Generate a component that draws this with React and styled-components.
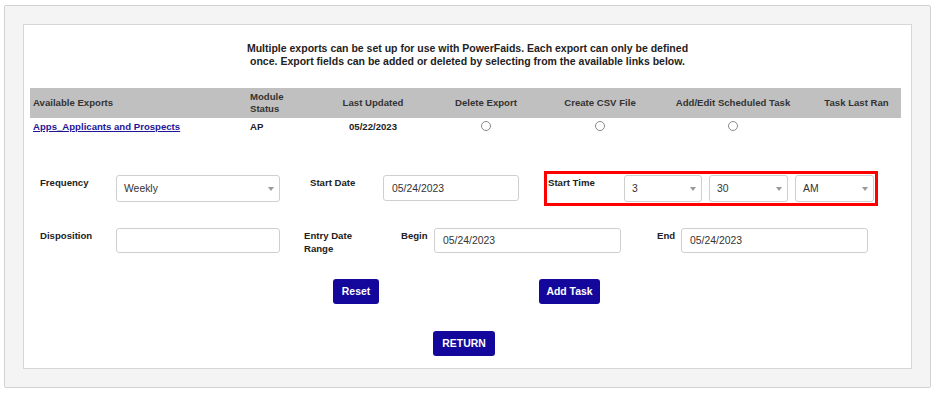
import styled, { createGlobalStyle } from "styled-components";

const GlobalStyle = createGlobalStyle`
  body {
    margin: 0;
    background: #fff;
    font-family: "Liberation Sans", Arial, sans-serif;
    color: #222;
  }
  * { box-sizing: border-box; }
`;

const Outer = styled.div`
  margin: 5px 0 0 4px;
  width: 927px;
  height: 383px;
  padding: 18px;
  background: #f4f4f4;
  border: 1px solid #d2d2d2;
  border-radius: 2px;
`;

const Inner = styled.div`
  width: 889px;
  height: 345px;
  padding: 17px 6px 0;
  background: #fff;
  border: 1px solid #d6d6d6;
`;

const Intro = styled.p`
  margin: 0 0 20px;
  text-align: center;
  font-size: 10.5px;
  font-weight: bold;
  line-height: 13px;
  color: #222;
`;

const Grid = styled.div`
  display: grid;
  width: 871px;
  grid-template-columns: 217px 73px 106px 120px 108px 158px 89px;
`;

const HeadRow = styled(Grid)`
  height: 30px;
  background: #c0c0c0;
`;

const BodyRow = styled(Grid)`
  height: 18px;
`;

const Cell = styled.div`
  display: flex;
  align-items: center;
  justify-content: ${(p) => (p.$left ? "flex-start" : "center")};
  padding-left: ${(p) => (p.$left ? "3px" : "0")};
  font-size: 9.6px;
  font-weight: bold;
  line-height: 12px;
  color: ${(p) => (p.$head ? "#333" : "#222")};
`;

const ExportLink = styled.a`
  color: #1f1596;
  text-decoration: underline;
  cursor: pointer;
`;

const Radio = styled.span`
  display: inline-block;
  width: 10px;
  height: 10px;
  margin-top: -3px;
  border: 1px solid #8a8a8a;
  border-radius: 50%;
  background: #fff;
`;

const FormRow = styled.div`
  display: flex;
  align-items: flex-start;
  padding-left: 10px;
  margin-top: ${(p) => p.$mt}px;
`;

const Label = styled.div`
  flex: none;
  width: ${(p) => p.$w}px;
  margin-left: ${(p) => p.$ml || 0}px;
  padding-top: ${(p) => p.$pt || 0}px;
  font-size: 9.6px;
  font-weight: bold;
  line-height: 13px;
  color: #222;
`;

const Control = styled.div`
  flex: none;
  position: relative;
  display: flex;
  align-items: center;
  width: ${(p) => p.$w}px;
  height: ${(p) => p.$h || 26}px;
  margin-top: ${(p) => p.$mt || 0}px;
  padding-left: ${(p) => (p.$select ? 7 : 8)}px;
  border: 1px solid #cfcfcf;
  border-radius: 3px;
  background: #fff;
  font-size: 10.4px;
  color: #333;

  ${(p) =>
    p.$select &&
    `
    &::after {
      content: "";
      position: absolute;
      right: 5px;
      top: 11px;
      border-left: 3.5px solid transparent;
      border-right: 3.5px solid transparent;
      border-top: 4px solid #999;
    }
  `}
`;

const TimeBox = styled.div`
  flex: none;
  display: flex;
  align-items: flex-start;
  gap: 7px;
  margin-left: ${(p) => p.$ml}px;
  padding: 1px;
  border: 3px solid #ff0000;
`;

const ButtonRow = styled.div`
  display: flex;
  justify-content: center;
  gap: ${(p) => p.$gap || 0}px;
  margin-top: ${(p) => p.$mt}px;
  padding-right: ${(p) => p.$pr || 0}px;
`;

const Button = styled.button`
  width: ${(p) => p.$w}px;
  height: 25px;
  padding: 0;
  border: none;
  border-radius: 3px;
  background: #14079b;
  color: #fff;
  font-family: "Liberation Sans", Arial, sans-serif;
  font-size: 10.4px;
  font-weight: bold;
  cursor: pointer;
`;

const headers = [
  "Last Updated",
  "Delete Export",
  "Create CSV File",
  "Add/Edit Scheduled Task",
  "Task Last Ran",
];

export default function App() {
  return (
    <>
      <GlobalStyle />
      <Outer>
        <Inner>
          <Intro>
            Multiple exports can be set up for use with PowerFaids. Each export can only be defined
            <br />
            once. Export fields can be added or deleted by selecting from the available links below.
          </Intro>

          <HeadRow>
            <Cell $head $left>Available Exports</Cell>
            <Cell $head $left>Module<br />Status</Cell>
            {headers.map((h) => (
              <Cell $head key={h}>{h}</Cell>
            ))}
          </HeadRow>
          <BodyRow>
            <Cell $left>
              <ExportLink>Apps_Applicants and Prospects</ExportLink>
            </Cell>
            <Cell $left>AP</Cell>
            <Cell>05/22/2023</Cell>
            <Cell><Radio /></Cell>
            <Cell><Radio /></Cell>
            <Cell><Radio /></Cell>
            <Cell />
          </BodyRow>

          <FormRow $mt={35}>
            <Label $w={76} $pt={5}>Frequency</Label>
            <Control $select $w={164} $h={27} $mt={4}>Weekly</Control>
            <Label $w={73} $ml={30} $pt={5}>Start Date</Label>
            <Control $w={136} $mt={4}>05/24/2023</Control>
            <TimeBox $ml={25}>
              <Label $w={69} $pt={1}>Start Time</Label>
              <Control $select $w={78} $h={27}>3</Control>
              <Control $select $w={79} $h={27}>30</Control>
              <Control $select $w={79} $h={27}>AM</Control>
            </TimeBox>
          </FormRow>

          <FormRow $mt={22}>
            <Label $w={76} $pt={1}>Disposition</Label>
            <Control $w={164} $h={25} />
            <Label $w={97} $ml={24} $pt={1}>Entry Date<br />Range</Label>
            <Label $w={33} $pt={1}>Begin</Label>
            <Control $w={187} $h={25}>05/24/2023</Control>
            <Label $w={24} $ml={36} $pt={1}>End</Label>
            <Control $w={187} $h={25}>05/24/2023</Control>
          </FormRow>

          <ButtonRow $mt={24} $gap={160} $pr={2}>
            <Button $w={46}>Reset</Button>
            <Button $w={61}>Add Task</Button>
          </ButtonRow>
          <ButtonRow $mt={27} $pr={7}>
            <Button $w={62}>RETURN</Button>
          </ButtonRow>
        </Inner>
      </Outer>
    </>
  );
}
